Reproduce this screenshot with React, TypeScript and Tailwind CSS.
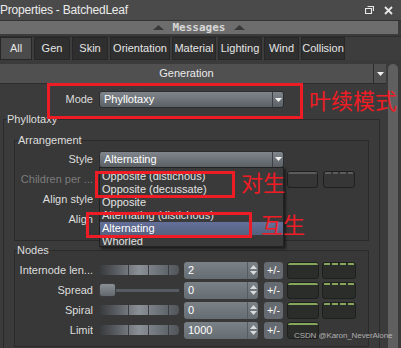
import React from "react";

const tabs = [
  { name: "All", w: "w-[32px]", active: true },
  { name: "Gen", w: "w-[36px]" },
  { name: "Skin", w: "w-[36px]" },
  { name: "Orientation", w: "w-[60px]" },
  { name: "Material", w: "w-[44px]" },
  { name: "Lighting", w: "w-[44px]" },
  { name: "Wind", w: "w-[35px]" },
  { name: "Collision", w: "w-[44px]" },
];

const listItems = [
  "Opposite (distichous)",
  "Opposite (decussate)",
  "Opposite",
  "Alternating (distichous)",
  "Alternating",
  "Whorled",
];

function Arrow() {
  return (
    <svg width="7" height="4" viewBox="0 0 7 4">
      <path d="M0 0h7L3.5 4z" fill="#f2f2f2" />
    </svg>
  );
}

function Dropdown({ value }: { value: string }) {
  return (
    <div className="flex h-[17px] w-[185px] rounded-[3px] border border-[#2b2e31] bg-gradient-to-b from-[#80868c] to-[#5b6065]">
      <div className="flex-1 pl-[4px] leading-[15px] text-white">{value}</div>
      <div className="flex w-[11px] items-center justify-center border-l border-[#3d4145]">
        <Arrow />
      </div>
    </div>
  );
}

function Slider() {
  return (
    <div className="flex h-[10px] w-[80px] overflow-hidden rounded-[4px] bg-gradient-to-r from-[#36393c] via-[#8b9197] to-[#50555a]">
      <div className="w-[29px]" />
      <div className="w-[20px] border-l border-[#3a3e42]" />
      <div className="w-[20px] border-l border-[#3a3e42]" />
      <div className="flex-1 border-l border-[#3a3e42]" />
    </div>
  );
}

function SpreadSlider() {
  return (
    <div className="flex w-[80px] items-center">
      <div className="h-[14px] w-[17px] rounded-[3px] border border-[#3a3e42] bg-gradient-to-b from-[#8a9096] to-[#62686d]" />
      <div className="h-[3px] flex-1 bg-[#565c61]" />
    </div>
  );
}

function Spin({ value }: { value: string }) {
  return (
    <div className="flex h-[17px] w-[74px] rounded-[3px] bg-gradient-to-b from-[#7a8187] to-[#656c72]">
      <div className="flex-1 pl-[4px] leading-[17px] text-white">{value}</div>
      <div className="flex w-[11px] flex-col items-center justify-center gap-[2px] border-l border-[#555b60]">
        <svg width="7" height="4" viewBox="0 0 7 4">
          <path d="M0 4h7L3.5 0z" fill="#d8dadc" />
        </svg>
        <svg width="7" height="4" viewBox="0 0 7 4">
          <path d="M0 0h7L3.5 4z" fill="#d8dadc" />
        </svg>
      </div>
    </div>
  );
}

function GreenBox({ dashed, muted, w }: { dashed?: boolean; muted?: boolean; w: string }) {
  const line = muted ? "bg-[#5c5c5c]" : "bg-[#86a65c]";
  return (
    <div className={`${w} h-[17px] overflow-hidden rounded-[3px] border border-[#1e201e] ${muted ? "bg-[#363636]" : "bg-[#2b2d2b]"}`}>
      {dashed ? (
        <div className="flex h-[2px] gap-[2px] px-[1px]">
          <div className={`flex-1 ${line}`} />
          <div className={`flex-1 ${line}`} />
          <div className={`flex-1 ${line}`} />
          <div className={`flex-1 ${line}`} />
        </div>
      ) : (
        <div className={`h-[2px] ${line}`} />
      )}
    </div>
  );
}

function Row({ label, muted, children }: { label: string; muted?: boolean; children?: React.ReactNode }) {
  return (
    <div className="flex h-[20px] items-center">
      <div className={`w-[78px] truncate text-right ${muted ? "text-[#7c7c7c]" : ""}`}>{label}</div>
      <div className="ml-[6px] flex items-center">{children}</div>
    </div>
  );
}

function NodeRow({ label, value, spread, single }: { label: string; value: string; spread?: boolean; single?: boolean }) {
  return (
    <Row label={label}>
      {spread ? <SpreadSlider /> : <Slider />}
      <div className="ml-[5px]">
        <Spin value={value} />
      </div>
      <div className="ml-[6px] flex h-[17px] w-[19px] items-center justify-center rounded-[3px] bg-[#656b71] text-white">+/-</div>
      <div className="ml-[4px]">
        <GreenBox w="w-[32px]" />
      </div>
      {!single && (
        <div className="ml-[3px]">
          <GreenBox w="w-[34px]" dashed />
        </div>
      )}
    </Row>
  );
}

export default function App() {
  return (
    <div className="relative h-[348px] w-[401px] overflow-hidden bg-[#3b3b3b] font-['Liberation_Sans',sans-serif] text-[11px] text-[#dedede]">
      {/* Title bar */}
      <div className="flex h-[20px] items-center justify-between bg-[#4a4a4a] pr-[8px] text-[12px] text-[#ececec]">
        <span className="tracking-[-0.2px]">Properties - BatchedLeaf</span>
        <div className="flex items-center gap-[10px]">
          <svg width="9" height="8" viewBox="0 0 9 8">
            <path d="M2.5 0.5h6v4.5M0.5 2.5h6v5h-6z" fill="none" stroke="#e8e8e8" strokeWidth="1.2" />
          </svg>
          <svg width="9" height="9" viewBox="0 0 9 9">
            <path d="M1 1l7 7M8 1l-7 7" stroke="#e8e8e8" strokeWidth="1.8" />
          </svg>
        </div>
      </div>

      {/* Messages bar */}
      <div className="border-t border-[#333] pr-[3px]">
        <div className="flex h-[13px] items-center justify-center gap-[9px] bg-[#6d6d6d] font-['DejaVu_Sans_Mono',monospace] text-[11px] font-bold text-[#d8d8d8]">
          <svg width="11" height="5" viewBox="0 0 11 5">
            <path d="M0 5h11L5.5 0z" fill="#3a3a3a" />
          </svg>
          <span className="leading-[13px]">Messages</span>
          <svg width="11" height="5" viewBox="0 0 11 5">
            <path d="M0 5h11L5.5 0z" fill="#3a3a3a" />
          </svg>
        </div>
      </div>

      {/* Tabs */}
      <div className="mt-[2px] flex h-[24px] gap-[2px] border-t border-[#2e2e2e] bg-[#3d3d3d]">
        {tabs.map((t) => (
          <div
            key={t.name}
            className={`${t.w} flex items-center justify-center border border-[#272727] ${t.active ? "bg-[#4b4b4b]" : "bg-[#2f2f2f]"} text-[#e6e6e6]`}
          >
            {t.name}
          </div>
        ))}
      </div>

      {/* Body */}
      <div className="mt-[4px] flex">
        <div className="w-[386px]">
          {/* Generation header */}
          <div className="flex h-[20px]">
            <div className="flex w-[373px] items-center justify-center border-b border-[#2c2c2c] bg-[#505050] text-[#eaeaea]">Generation</div>
            <div className="flex w-[13px] items-center justify-center border-b border-l border-[#2c2c2c] bg-[#505050]">
              <Arrow />
            </div>
          </div>

          {/* Mode */}
          <div className="mt-[7px] flex h-[17px] items-center">
            <div className="w-[93px] text-right">Mode</div>
            <div className="ml-[6px]">
              <Dropdown value="Phyllotaxy" />
            </div>
          </div>

          {/* Phyllotaxy group */}
          <fieldset className="ml-[3px] mt-[5px] w-[377px] border border-[#2a2a2a] pb-[20px]">
            <legend className="ml-[3px] leading-[13px]">Phyllotaxy</legend>

            <fieldset className="ml-[10px] mt-[8px] w-[355px] border border-[#2a2a2a] bg-[#383838] pb-[11px] pt-[2px]">
              <legend className="ml-[3px] leading-[13px]">Arrangement</legend>
              <Row label="Style">
                <Dropdown value="Alternating" />
              </Row>
              <Row label="Children per ..." muted>
                <div className="h-[17px] w-[185px]" />
                <div className="ml-[3px]">
                  <GreenBox w="w-[31px]" muted />
                </div>
                <div className="ml-[5px]">
                  <GreenBox w="w-[32px]" muted dashed />
                </div>
              </Row>
              <Row label="Align style">
                <Dropdown value="" />
              </Row>
              <Row label="Align">
                <Dropdown value="" />
              </Row>
            </fieldset>

            <fieldset className="ml-[10px] mt-[3px] w-[355px] border border-[#2a2a2a] bg-[#383838] pb-[6px] pt-[3px]">
              <legend className="ml-[2px] leading-[13px]">Nodes</legend>
              <NodeRow label="Internode len..." value="2" />
              <NodeRow label="Spread" value="0" spread />
              <NodeRow label="Spiral" value="0" />
              <NodeRow label="Limit" value="1000" single />
            </fieldset>
          </fieldset>
        </div>

        {/* Scrollbar */}
        <div className="ml-[2px] h-[290px] w-[10px] rounded-t-[5px] bg-[#5f5f5f]" />
      </div>

      {/* Open dropdown list */}
      <div className="absolute left-[99px] top-[167px] h-[80px] w-[185px] overflow-hidden border border-[#222] bg-[#3a3a3a] pt-[2px] shadow-[2px_2px_2px_rgba(0,0,0,0.5)]">
        {listItems.map((item) => (
          <div
            key={item}
            className={`h-[13px] pl-[2px] leading-[13px] ${item === "Alternating" ? "bg-gradient-to-b from-[#64709a] to-[#56617f] text-white" : "text-[#e2e2e2]"}`}
          >
            {item}
          </div>
        ))}
      </div>

      {/* Annotations */}
      <div className="absolute left-[47px] top-[83px] h-[36px] w-[256px] border-[3px] border-[#ee1c25]" />
      <div className="absolute left-[309px] top-[86px] font-['Noto_Sans_CJK_SC',sans-serif] text-[22px] leading-[26px] text-[#ee1c25]">叶续模式</div>
      <div className="absolute left-[95px] top-[171px] h-[27px] w-[140px] border-[3px] border-[#ee1c25]" />
      <div className="absolute left-[241px] top-[168px] font-['Noto_Sans_CJK_SC',sans-serif] text-[22px] leading-[26px] text-[#ee1c25]">对生</div>
      <div className="absolute left-[86px] top-[212px] h-[26px] w-[166px] border-[3px] border-[#ee1c25]" />
      <div className="absolute left-[261px] top-[210px] font-['Noto_Sans_CJK_SC',sans-serif] text-[22px] leading-[26px] text-[#ee1c25]">互生</div>

      {/* Watermark */}
      <div className="absolute left-[294px] top-[330px] text-[8px] tracking-[-0.1px] text-[#cfcfcf]/80">CSDN @Karon_NeverAlone</div>
    </div>
  );
}
